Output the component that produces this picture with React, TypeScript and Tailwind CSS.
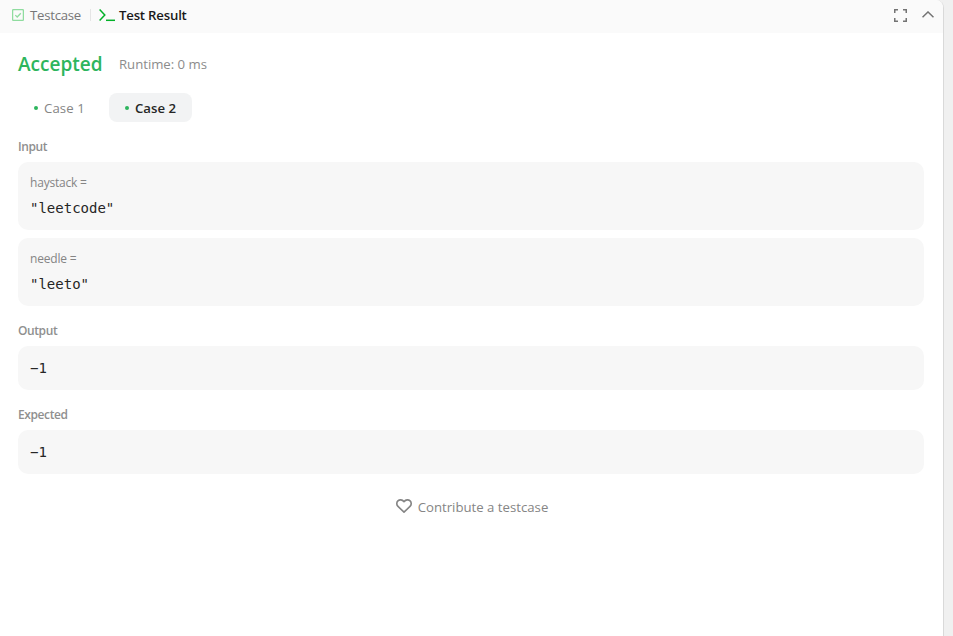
import { useState } from "react";

const CASES = [
  {
    inputs: [
      { name: "haystack", value: '"sadbutsad"' },
      { name: "needle", value: '"sad"' },
    ],
    output: "0",
    expected: "0",
  },
  {
    inputs: [
      { name: "haystack", value: '"leetcode"' },
      { name: "needle", value: '"leeto"' },
    ],
    output: "−1",
    expected: "−1",
  },
];

function Label({ children }: { children: string }) {
  return (
    <div className="mb-[7px] h-4 text-[12px] leading-[15px] font-semibold tracking-[-0.4px] text-[#8f8f8f]">
      {children}
    </div>
  );
}

function ValueBox({ name, value }: { name?: string; value: string }) {
  return (
    <div className="rounded-[10px] bg-[#f7f7f7] px-3 py-3">
      {name && (
        <div className="mb-[6px] text-[12px] leading-[18px] tracking-[-0.2px] text-[#858585]">
          {name} =
        </div>
      )}
      <div className="font-['DejaVu_Sans_Mono',monospace] text-sm leading-5 text-[#262626]">
        {value}
      </div>
    </div>
  );
}

function TabBar() {
  return (
    <div className="flex h-[33px] items-center bg-[#fafafa] pr-[9px] pl-3 pb-[3px]">
      <svg
        className="h-3 w-3"
        viewBox="0 0 12 12"
        fill="none"
        stroke="#8fdc9f"
        strokeWidth="1.3"
      >
        <rect x="0.6" y="0.6" width="10.8" height="10.8" rx="1" />
        <path d="M3.3 6.1l1.9 1.9 3.6-3.8" />
      </svg>
      <span className="ml-1.5 w-[51px] pt-0.5 text-[13.2px] whitespace-nowrap tracking-[-0.25px] text-[#777]">
        Testcase
      </span>
      <div className="mr-2 ml-[9px] h-3 w-px bg-[#e5e5e5]" />
      <svg
        className="h-3.5 w-4"
        viewBox="0 0 16 14"
        fill="none"
        stroke="#02b128"
        strokeWidth="1.5"
      >
        <path d="M0.6 1.6l5.2 5.4-5.2 5.4" />
        <path d="M7 12.3h9" />
      </svg>
      <span className="ml-1 pt-0.5 text-[13.2px] whitespace-nowrap font-semibold tracking-[-0.2px] text-[#1a1a1a]">
        Test Result
      </span>
      <div className="ml-auto flex items-center gap-[15px]">
        <svg
          className="h-[13px] w-[13px]"
          viewBox="0 0 13 13"
          fill="none"
          stroke="#737373"
          strokeWidth="1.5"
        >
          <path d="M0.75 4V0.75H4M9 0.75h3.25V4M12.25 9v3.25H9M4 12.25H0.75V9" />
        </svg>
        <svg
          className="h-2 w-3"
          viewBox="0 0 12 8"
          fill="none"
          stroke="#737373"
          strokeWidth="1.5"
        >
          <path d="M0.5 6.3L6 1l5.5 5.3" />
        </svg>
      </div>
    </div>
  );
}

export default function App() {
  const [active, setActive] = useState<number>(1);
  const current = CASES[active];

  return (
    <div className="flex h-[636px] w-[953px] overflow-hidden bg-[#f0f0f0] font-['Open_Sans','Noto_Sans',sans-serif]">
      <div className="w-[944px] overflow-hidden rounded-tr-lg border-r border-[#d9d9d9] bg-white">
        <TabBar />
        <div className="pr-[19px] pl-[18px]">
          <div className="flex h-[60px] items-center gap-4 pt-1">
            <span className="w-[85px] whitespace-nowrap pb-0.5 text-[19px] leading-6 font-semibold text-[#2db55d]">
              Accepted
            </span>
            <span className="whitespace-nowrap text-[13.2px] tracking-[-0.03px] text-[#8c8c8c]">
              Runtime: 0 ms
            </span>
          </div>

          <div className="flex gap-2">
            {CASES.map((_, index) => (
              <button
                key={index}
                onClick={() => setActive(index)}
                className={`flex h-[29px] w-[83px] items-center rounded-lg pl-4 text-[13.2px] whitespace-nowrap ${
                  index === active
                    ? "bg-[#f2f3f4] font-semibold text-[#262626]"
                    : "font-medium tracking-[0.1px] text-[#858585]"
                }`}
              >
                <span className="mr-1.5 h-1 w-1 rounded-full bg-[#2db55d]" />
                <span className="pt-0.5">Case {index + 1}</span>
              </button>
            ))}
          </div>

          <div className="mt-[17px]">
            <Label>Input</Label>
            <div className="flex flex-col gap-2">
              {current.inputs.map((input) => (
                <ValueBox
                  key={input.name}
                  name={input.name}
                  value={input.value}
                />
              ))}
            </div>
          </div>

          <div className="mt-[17px]">
            <Label>Output</Label>
            <ValueBox value={current.output} />
          </div>

          <div className="mt-[17px]">
            <Label>Expected</Label>
            <ValueBox value={current.expected} />
          </div>

          <div className="mt-[23px] flex items-center justify-center pl-0.5 text-[#858585]">
            <svg
              className="mb-0.5 h-4 w-4"
              viewBox="0 0 16 16"
              fill="none"
              stroke="currentColor"
              strokeWidth="1.6"
              strokeLinejoin="round"
            >
              <path d="M8 14.2L2 8.4C0.4 6.8 0.4 4.3 1.9 2.9 3.6 1.3 6.1 1.5 8 3.6 9.9 1.5 12.4 1.3 14.1 2.9 15.6 4.3 15.6 6.8 14 8.4z" />
            </svg>
            <span className="ml-1.5 text-[13.2px] leading-5 whitespace-nowrap">
              Contribute a testcase
            </span>
          </div>
        </div>
      </div>
    </div>
  );
}
